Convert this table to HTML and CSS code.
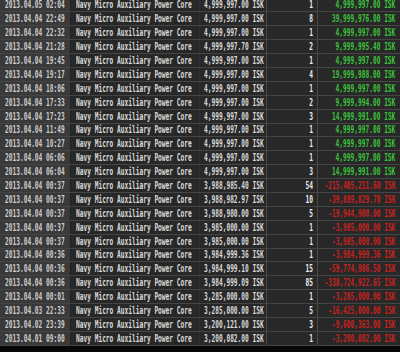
FILE: index.html
```html
<!DOCTYPE html>
<html lang="en">
<head>
    <meta charset="UTF-8">
    <title>Market Transactions</title>
    <link rel="stylesheet" href="styles.css">
</head>
<body>
    <div class="journal">
        <div class="row"><div class="cell date"><span>2013.04.05 02:04</span></div><div class="cell item"><span>Navy Micro Auxiliary Power Core</span></div><div class="cell price"><span>4,999,997.00 ISK</span></div><div class="cell qty"><span>1</span></div><div class="cell total buy"><span>4,999,997.00 ISK</span></div></div>
        <div class="row"><div class="cell date"><span>2013.04.04 22:49</span></div><div class="cell item"><span>Navy Micro Auxiliary Power Core</span></div><div class="cell price"><span>4,999,997.00 ISK</span></div><div class="cell qty"><span>8</span></div><div class="cell total buy"><span>39,999,976.00 ISK</span></div></div>
        <div class="row"><div class="cell date"><span>2013.04.04 22:32</span></div><div class="cell item"><span>Navy Micro Auxiliary Power Core</span></div><div class="cell price"><span>4,999,997.00 ISK</span></div><div class="cell qty"><span>1</span></div><div class="cell total buy"><span>4,999,997.00 ISK</span></div></div>
        <div class="row"><div class="cell date"><span>2013.04.04 21:28</span></div><div class="cell item"><span>Navy Micro Auxiliary Power Core</span></div><div class="cell price"><span>4,999,997.70 ISK</span></div><div class="cell qty"><span>2</span></div><div class="cell total buy"><span>9,999,995.40 ISK</span></div></div>
        <div class="row"><div class="cell date"><span>2013.04.04 19:45</span></div><div class="cell item"><span>Navy Micro Auxiliary Power Core</span></div><div class="cell price"><span>4,999,997.00 ISK</span></div><div class="cell qty"><span>1</span></div><div class="cell total buy"><span>4,999,997.00 ISK</span></div></div>
        <div class="row"><div class="cell date"><span>2013.04.04 19:17</span></div><div class="cell item"><span>Navy Micro Auxiliary Power Core</span></div><div class="cell price"><span>4,999,997.00 ISK</span></div><div class="cell qty"><span>4</span></div><div class="cell total buy"><span>19,999,988.00 ISK</span></div></div>
        <div class="row"><div class="cell date"><span>2013.04.04 18:06</span></div><div class="cell item"><span>Navy Micro Auxiliary Power Core</span></div><div class="cell price"><span>4,999,997.00 ISK</span></div><div class="cell qty"><span>1</span></div><div class="cell total buy"><span>4,999,997.00 ISK</span></div></div>
        <div class="row"><div class="cell date"><span>2013.04.04 17:33</span></div><div class="cell item"><span>Navy Micro Auxiliary Power Core</span></div><div class="cell price"><span>4,999,997.00 ISK</span></div><div class="cell qty"><span>2</span></div><div class="cell total buy"><span>9,999,994.00 ISK</span></div></div>
        <div class="row"><div class="cell date"><span>2013.04.04 17:23</span></div><div class="cell item"><span>Navy Micro Auxiliary Power Core</span></div><div class="cell price"><span>4,999,997.00 ISK</span></div><div class="cell qty"><span>3</span></div><div class="cell total buy"><span>14,999,991.00 ISK</span></div></div>
        <div class="row"><div class="cell date"><span>2013.04.04 11:49</span></div><div class="cell item"><span>Navy Micro Auxiliary Power Core</span></div><div class="cell price"><span>4,999,997.00 ISK</span></div><div class="cell qty"><span>1</span></div><div class="cell total buy"><span>4,999,997.00 ISK</span></div></div>
        <div class="row"><div class="cell date"><span>2013.04.04 10:27</span></div><div class="cell item"><span>Navy Micro Auxiliary Power Core</span></div><div class="cell price"><span>4,999,997.00 ISK</span></div><div class="cell qty"><span>1</span></div><div class="cell total buy"><span>4,999,997.00 ISK</span></div></div>
        <div class="row"><div class="cell date"><span>2013.04.04 06:06</span></div><div class="cell item"><span>Navy Micro Auxiliary Power Core</span></div><div class="cell price"><span>4,999,997.00 ISK</span></div><div class="cell qty"><span>1</span></div><div class="cell total buy"><span>4,999,997.00 ISK</span></div></div>
        <div class="row"><div class="cell date"><span>2013.04.04 06:04</span></div><div class="cell item"><span>Navy Micro Auxiliary Power Core</span></div><div class="cell price"><span>4,999,997.00 ISK</span></div><div class="cell qty"><span>3</span></div><div class="cell total buy"><span>14,999,991.00 ISK</span></div></div>
        <div class="row"><div class="cell date"><span>2013.04.04 00:37</span></div><div class="cell item"><span>Navy Micro Auxiliary Power Core</span></div><div class="cell price"><span>3,988,985.40 ISK</span></div><div class="cell qty"><span>54</span></div><div class="cell total sell"><span>-215,405,211.60 ISK</span></div></div>
        <div class="row"><div class="cell date"><span>2013.04.04 00:37</span></div><div class="cell item"><span>Navy Micro Auxiliary Power Core</span></div><div class="cell price"><span>3,988,982.97 ISK</span></div><div class="cell qty"><span>10</span></div><div class="cell total sell"><span>-39,889,829.70 ISK</span></div></div>
        <div class="row"><div class="cell date"><span>2013.04.04 00:37</span></div><div class="cell item"><span>Navy Micro Auxiliary Power Core</span></div><div class="cell price"><span>3,988,980.00 ISK</span></div><div class="cell qty"><span>5</span></div><div class="cell total sell"><span>-19,944,900.00 ISK</span></div></div>
        <div class="row"><div class="cell date"><span>2013.04.04 00:37</span></div><div class="cell item"><span>Navy Micro Auxiliary Power Core</span></div><div class="cell price"><span>3,985,000.00 ISK</span></div><div class="cell qty"><span>1</span></div><div class="cell total sell"><span>-3,985,000.00 ISK</span></div></div>
        <div class="row"><div class="cell date"><span>2013.04.04 00:37</span></div><div class="cell item"><span>Navy Micro Auxiliary Power Core</span></div><div class="cell price"><span>3,985,000.00 ISK</span></div><div class="cell qty"><span>1</span></div><div class="cell total sell"><span>-3,985,000.00 ISK</span></div></div>
        <div class="row"><div class="cell date"><span>2013.04.04 00:36</span></div><div class="cell item"><span>Navy Micro Auxiliary Power Core</span></div><div class="cell price"><span>3,984,999.36 ISK</span></div><div class="cell qty"><span>1</span></div><div class="cell total sell"><span>-3,984,999.36 ISK</span></div></div>
        <div class="row"><div class="cell date"><span>2013.04.04 00:36</span></div><div class="cell item"><span>Navy Micro Auxiliary Power Core</span></div><div class="cell price"><span>3,984,999.10 ISK</span></div><div class="cell qty"><span>15</span></div><div class="cell total sell"><span>-59,774,986.50 ISK</span></div></div>
        <div class="row"><div class="cell date"><span>2013.04.04 00:36</span></div><div class="cell item"><span>Navy Micro Auxiliary Power Core</span></div><div class="cell price"><span>3,984,999.09 ISK</span></div><div class="cell qty"><span>85</span></div><div class="cell total sell"><span>-338,724,922.65 ISK</span></div></div>
        <div class="row"><div class="cell date"><span>2013.04.04 00:01</span></div><div class="cell item"><span>Navy Micro Auxiliary Power Core</span></div><div class="cell price"><span>3,285,000.00 ISK</span></div><div class="cell qty"><span>1</span></div><div class="cell total sell"><span>-3,285,000.00 ISK</span></div></div>
        <div class="row"><div class="cell date"><span>2013.04.03 22:33</span></div><div class="cell item"><span>Navy Micro Auxiliary Power Core</span></div><div class="cell price"><span>3,285,000.00 ISK</span></div><div class="cell qty"><span>5</span></div><div class="cell total sell"><span>-16,425,000.00 ISK</span></div></div>
        <div class="row"><div class="cell date"><span>2013.04.02 23:39</span></div><div class="cell item"><span>Navy Micro Auxiliary Power Core</span></div><div class="cell price"><span>3,200,121.00 ISK</span></div><div class="cell qty"><span>3</span></div><div class="cell total sell"><span>-9,600,363.00 ISK</span></div></div>
        <div class="row"><div class="cell date"><span>2013.04.01 09:00</span></div><div class="cell item"><span>Navy Micro Auxiliary Power Core</span></div><div class="cell price"><span>3,200,082.00 ISK</span></div><div class="cell qty"><span>1</span></div><div class="cell total sell"><span>-3,200,082.00 ISK</span></div></div>
    </div>
</body>
</html>
```
FILE: styles.css
```css
/* Wallet transactions list */
body {
    margin: 0;
    background: #080808;
    font-family: 'DejaVu Sans Mono', 'Liberation Mono', monospace;
    font-size: 10px;
    font-weight: bold;
    color: #d8d8d8;
    overflow: hidden;
}

.journal {
    margin-top: -1.5px;
    width: 400px;
}

.row {
    display: grid;
    grid-template-columns: 71px 129px 67px 51px 82px;
    height: 13.9px;
    box-sizing: border-box;
    border-bottom: 1px solid #454545;
    background: #282828;
}

.cell {
    display: flex;
    align-items: center;
    overflow: visible;
    white-space: nowrap;
    box-sizing: border-box;
}

/* the client font is very narrow, so squeeze the glyphs */
.cell span {
    flex-shrink: 0;
    display: inline-block;
    transform: scaleX(0.62);
    transform-origin: left center;
}

.date {
    background: #3a3a3a;
    border-right: 1px solid #222;
    padding-left: 5px;
    color: #cccccc;
}

.item {
    padding-left: 5px;
    border-right: 1px solid #303030;
}

.price {
    padding-left: 4px;
    border-right: 1px solid #4a4a4a;
}

.qty, .total {
    justify-content: flex-end;
}

.qty span, .total span {
    transform-origin: right center;
}

.qty {
    padding-right: 4px;
    border-right: 1px solid #4a4a4a;
    color: #ececec;
}

.total {
    padding-right: 5px;
}

.buy { color: #3cc23c; }
.sell { color: #c8231f; }
```
